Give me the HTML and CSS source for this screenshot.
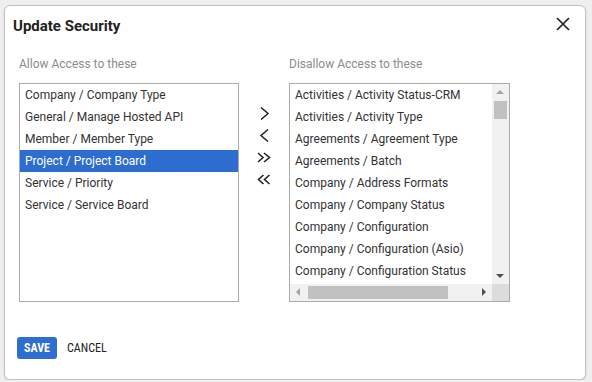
FILE: index.html
```html
<!DOCTYPE html>
<html>
<head>
  <title>Update Security</title>
  <link rel="stylesheet" href="styles.css">
</head>
<body>

<div class="dialog">
  <div class="head">
    <h1>Update Security</h1>
    <button class="close" title="Close">
      <svg width="14" height="14" viewBox="0 0 14 14"><path d="M1 1L13 13M13 1L1 13" stroke="#222" stroke-width="1.7" fill="none"/></svg>
    </button>
  </div>

  <div class="body">
    <div class="col col-left">
      <div class="label">Allow Access to these</div>
      <div class="box">
        <ul class="rows">
          <li>Company / Company Type</li>
          <li>General / Manage Hosted API</li>
          <li>Member / Member Type</li>
          <li class="selected">Project / Project Board</li>
          <li>Service / Priority</li>
          <li>Service / Service Board</li>
        </ul>
      </div>
    </div>

    <div class="moves">
      <button class="move"><svg width="11" height="13" viewBox="0 0 11 13"><path d="M2 0.5L9 6.5L2 12.5" stroke="#222" stroke-width="1.5" fill="none"/></svg></button>
      <button class="move"><svg width="11" height="13" viewBox="0 0 11 13"><path d="M9 0.5L2 6.5L9 12.5" stroke="#222" stroke-width="1.5" fill="none"/></svg></button>
      <button class="move"><svg width="14" height="11" viewBox="0 0 14 11"><path d="M1 1L6 5.5L1 10M7 1L12.5 5.5L7 10" stroke="#222" stroke-width="1.6" fill="none"/></svg></button>
      <button class="move"><svg width="14" height="11" viewBox="0 0 14 11"><path d="M6.5 1L1.5 5.5L6.5 10M12.5 1L7.5 5.5L12.5 10" stroke="#222" stroke-width="1.6" fill="none"/></svg></button>
    </div>

    <div class="col col-right">
      <div class="label">Disallow Access to these</div>
      <div class="box scroll">
        <ul class="rows">
          <li>Activities / Activity Status-CRM</li>
          <li>Activities / Activity Type</li>
          <li>Agreements / Agreement Type</li>
          <li>Agreements / Batch</li>
          <li>Company / Address Formats</li>
          <li>Company / Company Status</li>
          <li>Company / Configuration</li>
          <li>Company / Configuration (Asio)</li>
          <li>Company / Configuration Status</li>
        </ul>
        <div class="vbar">
          <span class="tri tri-up off"></span>
          <span class="vthumb"></span>
          <span class="tri tri-down"></span>
        </div>
        <div class="hbar">
          <span class="tri tri-left off"></span>
          <span class="hthumb"></span>
          <span class="tri tri-right"></span>
        </div>
        <div class="corner"></div>
      </div>
    </div>
  </div>

  <div class="foot">
    <button class="btn btn-save">SAVE</button>
    <button class="btn btn-cancel">CANCEL</button>
  </div>
</div>

</body>
</html>
```

FILE: styles.css
```css
body {
  margin: 0;
  padding: 0;
  background: #efefef;
  font-family: Roboto, "Liberation Sans", sans-serif;
  color: #333;
}

button {
  font-family: inherit;
  border: 0;
  background: none;
  padding: 0;
  cursor: pointer;
}

.dialog {
  margin: 5px 0 0 4px;
  width: 582px;
  height: 375px;
  box-sizing: border-box;
  border: 1px solid #c2c2c2;
  border-radius: 6px;
  background: #fff;
  box-shadow: 0 1px 2px rgba(0, 0, 0, 0.15);
  display: flex;
  flex-direction: column;
}

.head {
  display: flex;
  justify-content: space-between;
  align-items: flex-start;
  padding: 10px 15px 0 8px;
}

.head h1 {
  margin: 0;
  font-size: 15px;
  line-height: 20px;
  font-weight: bold;
  color: #222;
}

.close {
  width: 14px;
  height: 14px;
  margin-top: 1px;
  display: flex;
}

.body {
  display: flex;
  padding: 20px 0 0 14px;
}

.label {
  font-size: 12px;
  line-height: 16px;
  color: #8c8c8c;
  margin-bottom: 11px;
}

.col-left {
  width: 220px;
}

.col-right {
  width: 221px;
}

.box {
  height: 219px;
  box-sizing: border-box;
  border: 1px solid #ababab;
  overflow: hidden;
}

.rows {
  list-style: none;
  margin: 0;
  padding: 0;
}

.rows li {
  height: 22px;
  line-height: 22px;
  padding-left: 5px;
  font-size: 12px;
  color: #333;
  white-space: nowrap;
}

.rows li.selected {
  background: #2d6dcf;
  color: #fff;
}

.moves {
  width: 50px;
  display: flex;
  flex-direction: column;
  align-items: center;
  padding-top: 46px;
}

.move {
  height: 22px;
  width: 20px;
  display: flex;
  align-items: center;
  justify-content: center;
}

/* right list with its scrollbars */
.scroll {
  display: grid;
  grid-template-columns: 1fr 17px;
  grid-template-rows: 1fr 17px;
}

.scroll .rows {
  overflow: hidden;
}

.vbar, .hbar, .corner {
  background: #f1f1f1;
  position: relative;
}

.corner {
  background: #dcdcdc;
}

.vthumb {
  position: absolute;
  left: 2px;
  right: 2px;
  top: 17px;
  height: 18px;
  background: #c1c1c1;
}

.hthumb {
  position: absolute;
  top: 2px;
  bottom: 2px;
  left: 18px;
  width: 140px;
  background: #c1c1c1;
}

.tri {
  position: absolute;
  width: 0;
  height: 0;
  border: 4px solid transparent;
}

.tri-up {
  left: 4px;
  top: 2px;
  border-bottom-color: #505050;
}

.tri-down {
  left: 4px;
  bottom: 2px;
  border-top-color: #505050;
}

.tri-left {
  top: 4px;
  left: 2px;
  border-right-color: #505050;
}

.tri-right {
  top: 4px;
  right: 2px;
  border-left-color: #505050;
}

.tri-up.off {
  border-bottom-color: #a3a3a3;
}

.tri-left.off {
  border-right-color: #a3a3a3;
}

.foot {
  display: flex;
  align-items: center;
  padding: 35px 0 0 12px;
}

.btn {
  height: 22px;
  font-size: 12px;
  font-family: "Liberation Sans Narrow", "Roboto Condensed", Roboto, sans-serif;
}

.btn-save {
  width: 40px;
  background: #2e6dd1;
  color: #fff;
  font-weight: bold;
  border-radius: 3px;
}

.btn-cancel {
  margin-left: 10px;
  color: #222;
  font-weight: normal;
}
```
